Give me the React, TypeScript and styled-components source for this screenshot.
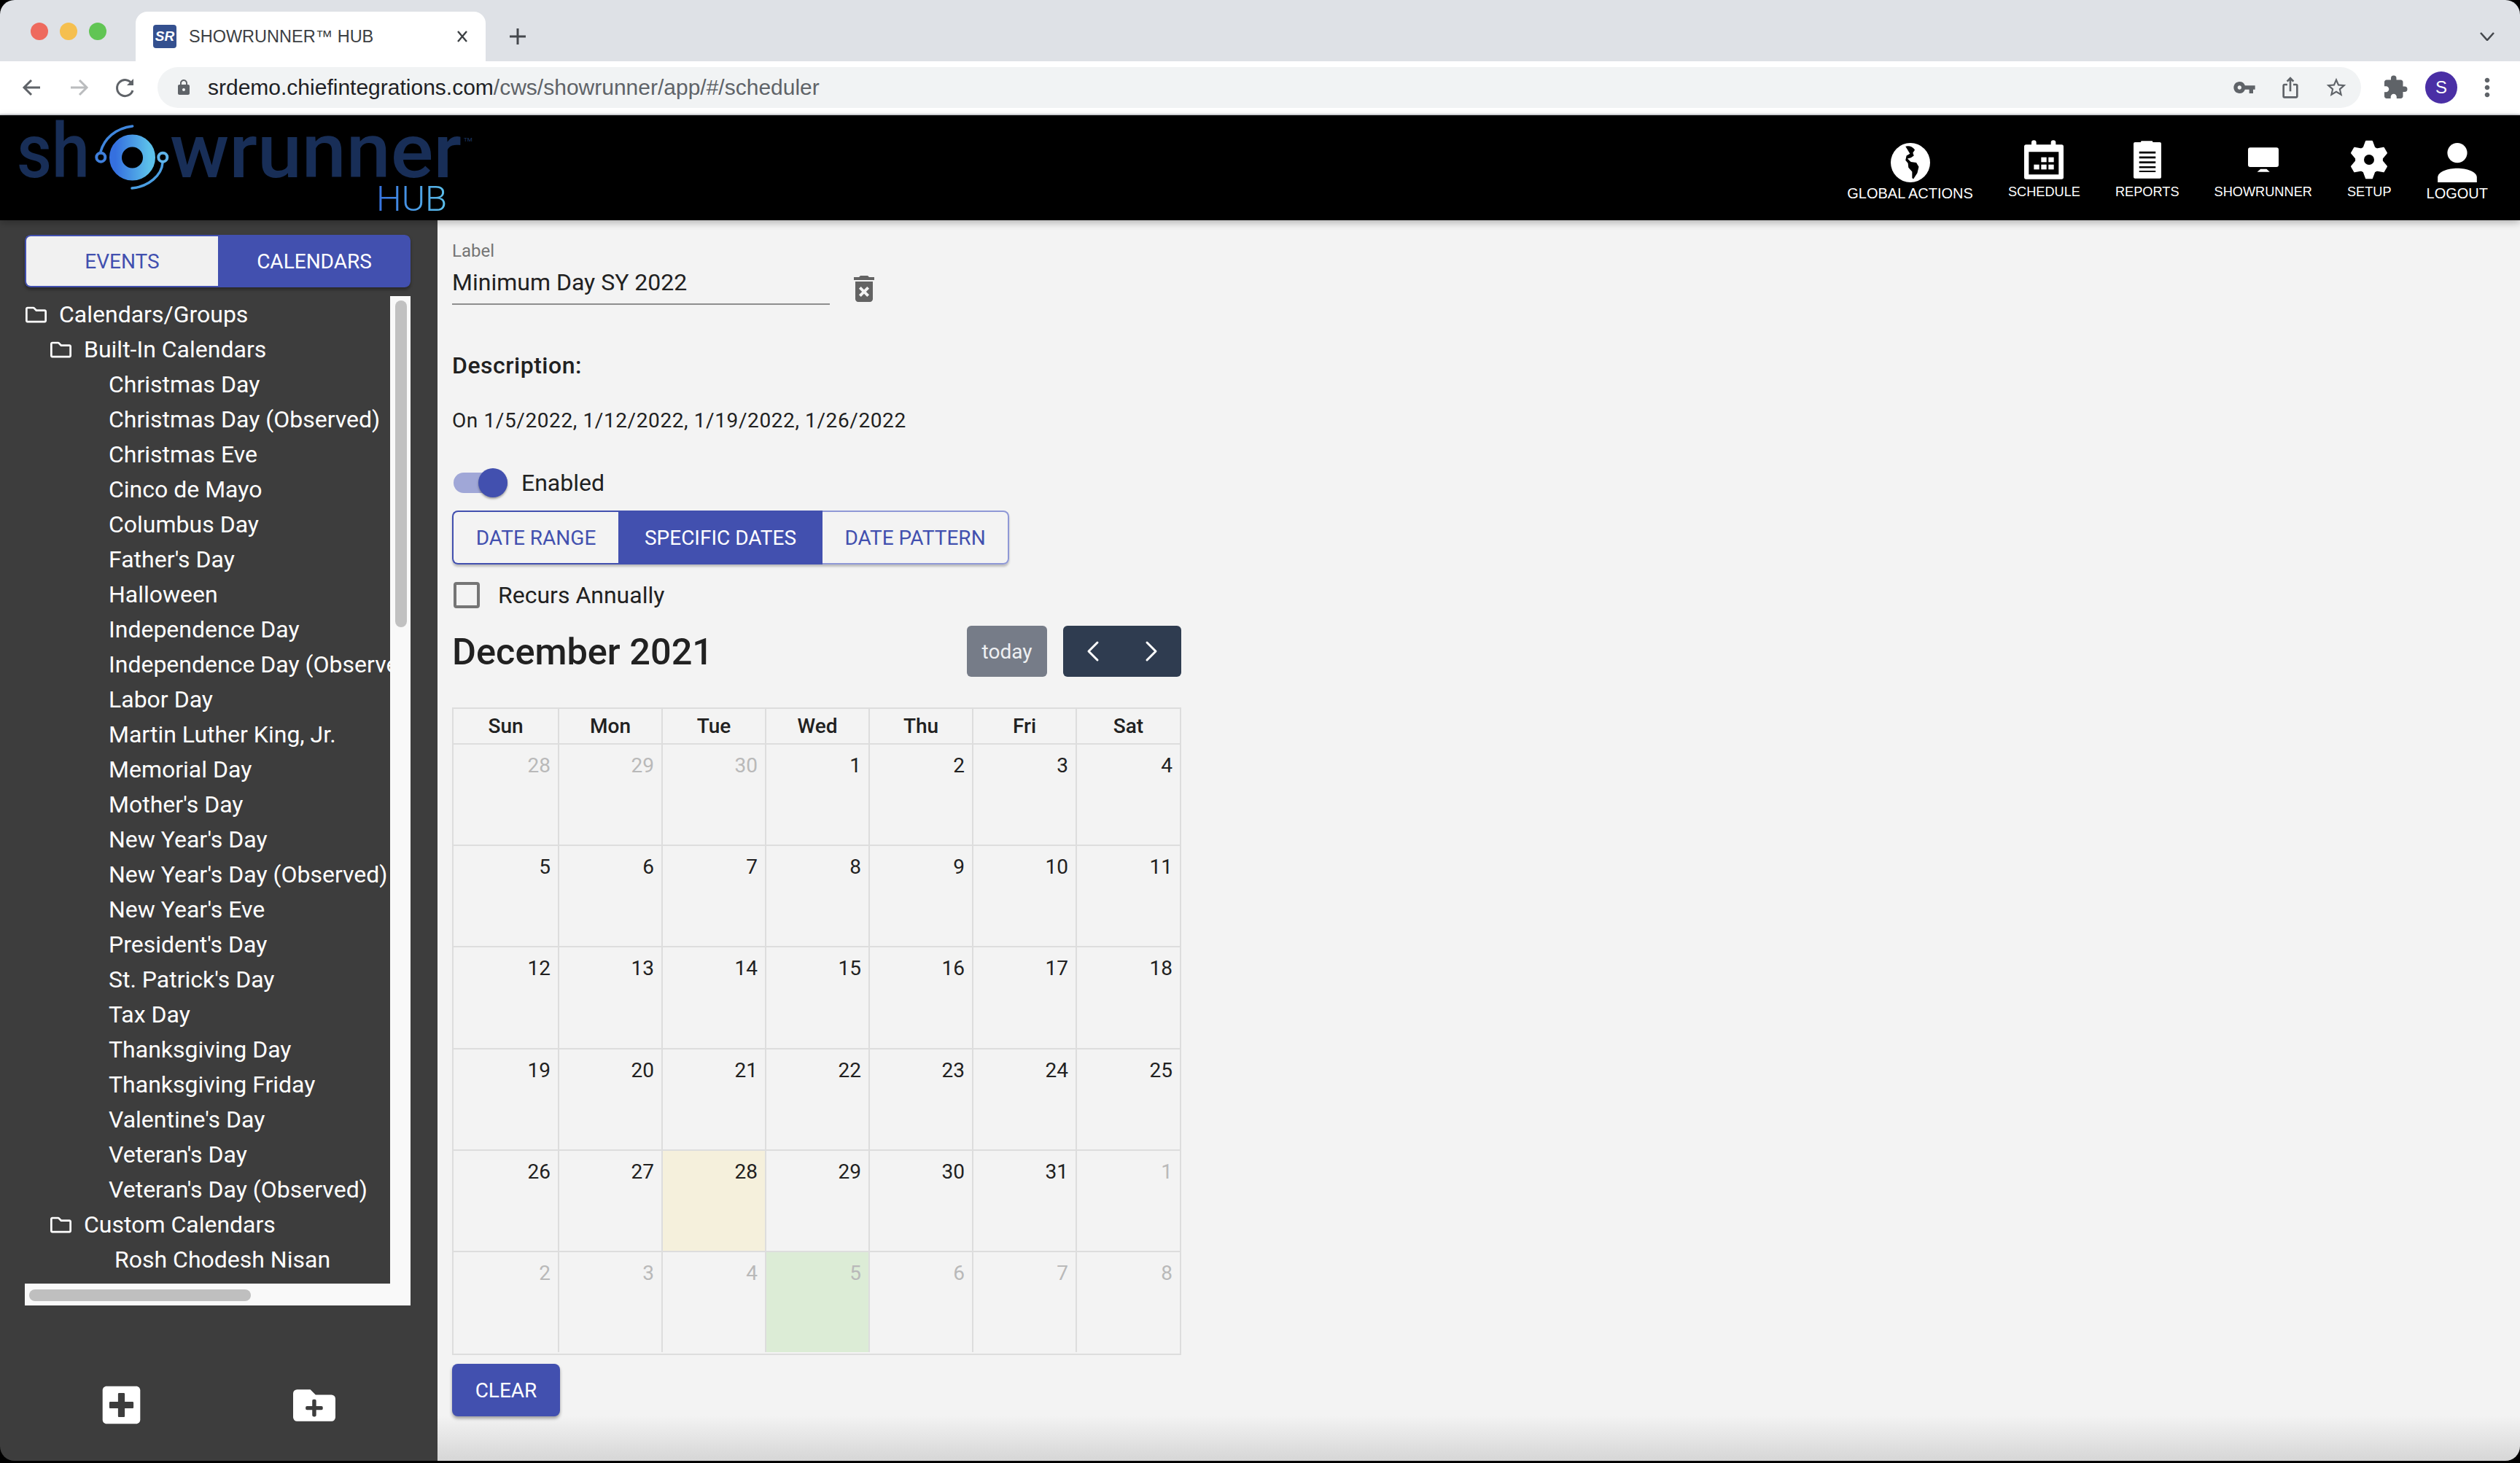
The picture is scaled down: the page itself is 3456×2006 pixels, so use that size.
import React from 'react';
import styled, { createGlobalStyle } from 'styled-components';
import { FaPlusSquare, FaFolderPlus, FaRegFolder } from 'react-icons/fa';
import { MdDeleteForever, MdVpnKey, MdIosShare, MdStarBorder, MdExtension, MdLock, MdMoreVert } from 'react-icons/md';
import { ChevronLeft, ChevronRight } from 'lucide-react';

const APP_FONT = `Roboto, "Noto Sans", sans-serif`;
const UI_FONT = `"Liberation Sans", Arial, sans-serif`;
const PRIMARY = '#4250af';

const Global = createGlobalStyle`
  html, body { margin: 0; padding: 0; background: #000; }
  #root { width: 3456px; height: 2006px; overflow: hidden; }
  * { box-sizing: border-box; }
`;

const Window = styled.div`
  width: 3456px;
  height: 2003px;
  display: flex;
  flex-direction: column;
  overflow: hidden;
  border-radius: 20px;
  font-family: ${APP_FONT};
  color: #212121;
`;

const TabStrip = styled.div`
  height: 84px;
  flex: none;
  background: #dee1e6;
  display: flex;
  padding-top: 16px;
  padding-right: 35px;
  font-family: ${UI_FONT};
`;
const Lights = styled.div`
  display: flex;
  gap: 16px;
  padding: 15px 40px 0 42px;
`;
const Light = styled.span<{ $c: string }>`
  width: 24px;
  height: 24px;
  border-radius: 50%;
  background: ${p => p.$c};
`;
const Tab = styled.div`
  width: 480px;
  background: #fff;
  border-radius: 16px 16px 0 0;
  display: flex;
  align-items: center;
  padding: 0 24px;
  gap: 17px;
`;
const Favicon = styled.span`
  width: 32px;
  height: 32px;
  flex: none;
  border-radius: 4px;
  background: #34508f;
  color: #fff;
  font: italic 700 19px ${UI_FONT};
  display: flex;
  align-items: center;
  justify-content: center;
`;
const TabTitle = styled.span`
  font-size: 23.5px;
  color: #3c4043;
  white-space: nowrap;
  flex: 1;
`;
const StripIcon = styled.span<{ $auto?: boolean }>`
  display: flex;
  align-items: center;
  margin-left: ${p => (p.$auto ? 'auto' : '32px')};
  color: #45484d;
`;

const Toolbar = styled.div`
  height: 74px;
  flex: none;
  background: #fff;
  border-bottom: 2px solid #dadce0;
  display: flex;
  align-items: center;
  padding-left: 28px;
  font-family: ${UI_FONT};
`;
const NavIcons = styled.div`
  display: flex;
  gap: 32px;
  margin-right: 28px;
  color: #5f6368;
`;
const Address = styled.div`
  width: 3022px;
  height: 56px;
  background: #f1f3f4;
  border-radius: 28px;
  display: flex;
  align-items: center;
  padding: 0 18px 0 24px;
  color: #5f6368;
`;
const Url = styled.span`
  font-size: 30px;
  margin-left: 21px;
  color: #5f6368;
  flex: 1;
  white-space: nowrap;
`;
const UrlHost = styled.span`
  color: #202124;
`;
const AddressIcons = styled.div`
  display: flex;
  gap: 31px;
`;
const Avatar = styled.span`
  width: 44px;
  height: 44px;
  border-radius: 50%;
  background: #4a2fa5;
  color: #fff;
  font-size: 24px;
  display: flex;
  align-items: center;
  justify-content: center;
  margin: 0 21px 0 23px;
`;
const ToolbarIcon = styled.span`
  display: flex;
  color: #5f6368;
  margin-left: 29px;
`;
const MoreIcon = styled.span`
  display: flex;
  color: #5f6368;
`;

const Header = styled.header`
  height: 144px;
  flex: none;
  background: #000;
  display: flex;
  justify-content: space-between;
  padding-right: 44px;
  position: relative;
  z-index: 2;
  box-shadow: 0 3px 10px rgba(0, 0, 0, 0.28);
`;
const NavBar = styled.nav`
  display: flex;
  gap: 48px;
`;
const NavItem = styled.div<{ $low?: boolean }>`
  display: flex;
  flex-direction: column;
  align-items: center;
  padding-top: ${p => (p.$low ? '38px' : '34px')};
  gap: ${p => (p.$low ? '3px' : '5px')};
  color: #fff;
`;
const NavGlyph = styled.span`
  height: 54px;
  display: flex;
  align-items: center;
  justify-content: center;
`;
const NavLabel = styled.span<{ $big?: boolean }>`
  font: ${p => (p.$big ? '20px' : '18.2px')}/24px ${UI_FONT};
  color: #fff;
  white-space: nowrap;
`;

const Body = styled.div`
  flex: 1;
  display: flex;
  min-height: 0;
`;
const Sidebar = styled.aside`
  width: 600px;
  flex: none;
  background: #3d3d3d;
  padding: 20px 37px 0 34px;
  display: flex;
  flex-direction: column;
`;
const SideTabs = styled.div`
  height: 72px;
  flex: none;
  display: grid;
  grid-template-columns: 265px 264px;
  border-radius: 8px;
  box-shadow: 0 3px 4px rgba(0, 0, 0, 0.35);
  overflow: hidden;
`;
const SideTab = styled.div<{ $on?: boolean }>`
  display: flex;
  align-items: center;
  justify-content: center;
  font-size: 28px;
  background: ${p => (p.$on ? PRIMARY : '#f1f1f1')};
  color: ${p => (p.$on ? '#fff' : PRIMARY)};
  border: 2px solid ${PRIMARY};
  border-right-width: ${p => (p.$on ? '2px' : '0')};
  border-radius: ${p => (p.$on ? '0 8px 8px 0' : '8px 0 0 8px')};
`;
const Tree = styled.div`
  margin-top: 12px;
  height: 1384px;
  flex: none;
  display: grid;
  grid-template-columns: 501px 28px;
  grid-template-rows: 1354px 30px;
  background: #f9f9f9;
`;
const TreeView = styled.div`
  background: #3d3d3d;
  overflow: hidden;
  padding-top: 1px;
`;
const TreeRow = styled.div<{ $indent: number }>`
  height: 48px;
  display: flex;
  align-items: center;
  gap: 17px;
  padding-left: ${p => p.$indent}px;
  font-size: 32px;
  color: #fff;
  white-space: nowrap;
`;
const VTrack = styled.div`
  padding: 6px 5px 0 7px;
`;
const VThumb = styled.div`
  height: 448px;
  background: #c1c1c1;
  border-radius: 8px;
`;
const HTrack = styled.div`
  grid-column: 1 / span 2;
  padding: 8px 0 0 6px;
`;
const HThumb = styled.div`
  width: 304px;
  height: 16px;
  background: #bfbfbf;
  border-radius: 8px;
`;
const SideFooter = styled.div`
  display: grid;
  grid-template-columns: 265px 264px;
  align-items: center;
  justify-items: center;
  height: 52px;
  margin-top: 107px;
  color: #fff;
`;

const Main = styled.main`
  flex: 1;
  padding: 28px 20px 0;
  background: linear-gradient(to top, #d6d6d6 0, #f3f3f3 62px);
`;
const Form = styled.div`
  width: 1000px;
  display: flex;
  flex-direction: column;
`;
const LabelRow = styled.div`
  display: flex;
  align-items: flex-end;
`;
const Field = styled.div`
  width: 518px;
  border-bottom: 2px solid #8e8e8e;
  padding-bottom: 9px;
`;
const FieldLabel = styled.div`
  font-size: 24px;
  line-height: 28px;
  color: #757575;
`;
const FieldValue = styled.div`
  font-size: 32px;
  line-height: 40px;
  margin-top: 9px;
`;
const TrashIcon = styled.span`
  display: flex;
  color: #636363;
  margin: 0 0 -2px 23px;
`;
const DescTitle = styled.div`
  margin-top: 63px;
  font-size: 32px;
  line-height: 40px;
  font-weight: 500;
  letter-spacing: 0.5px;
`;
const DescText = styled.div`
  margin-top: 38px;
  font-size: 28px;
  line-height: 36px;
  letter-spacing: 0.6px;
`;
const ToggleRow = styled.div`
  margin: 47px 0 0 2px;
  height: 40px;
  display: flex;
  align-items: center;
  gap: 19px;
  font-size: 32px;
`;
const Switch = styled.span`
  position: relative;
  width: 74px;
  height: 28px;
  border-radius: 14px;
  background: #a0a7d7;
`;
const SwitchThumb = styled.span`
  position: absolute;
  top: -6px;
  right: 0;
  width: 40px;
  height: 40px;
  border-radius: 50%;
  background: ${PRIMARY};
  box-shadow: 0 2px 3px rgba(0, 0, 0, 0.35);
`;
const Segments = styled.div`
  margin-top: 18px;
  width: 764px;
  height: 74px;
  display: grid;
  grid-template-columns: 228px 280px 256px;
  border-radius: 8px;
  box-shadow: 0 3px 3px rgba(0, 0, 0, 0.22);
`;
const Segment = styled.div<{ $on?: boolean; $pos: 'l' | 'm' | 'r' }>`
  display: flex;
  align-items: center;
  justify-content: center;
  font-size: 28px;
  background: ${p => (p.$on ? PRIMARY : '#f3f3f3')};
  color: ${p => (p.$on ? '#fff' : PRIMARY)};
  border: 2px solid ${p => (p.$pos === 'r' ? '#8f98d6' : PRIMARY)};
  border-left-width: ${p => (p.$pos === 'r' ? '0' : '2px')};
  border-right-width: ${p => (p.$pos === 'l' ? '0' : '2px')};
  border-radius: ${p => (p.$pos === 'l' ? '8px 0 0 8px' : p.$pos === 'r' ? '0 8px 8px 0' : '0')};
`;
const CheckRow = styled.div`
  margin: 24px 0 0 2px;
  height: 36px;
  display: flex;
  align-items: center;
  gap: 25px;
  font-size: 32px;
`;
const CheckBox = styled.span`
  width: 36px;
  height: 36px;
  border: 4px solid #757575;
  border-radius: 4px;
`;
const CalBar = styled.div`
  margin-top: 24px;
  height: 70px;
  display: flex;
  justify-content: space-between;
  align-items: center;
`;
const CalTitle = styled.h2`
  margin: 0;
  font-size: 50.5px;
  font-weight: 500;
  color: #212121;
`;
const CalButtons = styled.div`
  display: flex;
  gap: 22px;
  height: 70px;
`;
const TodayBtn = styled.div`
  width: 110px;
  border-radius: 6px;
  background: #767c88;
  color: #eef0f2;
  font-size: 28px;
  display: flex;
  align-items: center;
  justify-content: center;
`;
const NavGroup = styled.div`
  width: 162px;
  border-radius: 6px;
  background: #2f3c50;
  color: #fff;
  display: flex;
  align-items: center;
  justify-content: space-between;
  padding: 0 17px;
`;
const Calendar = styled.div`
  margin-top: 42px;
  height: 888px;
  display: grid;
  grid-template-columns: 143px repeat(5, 142px) 143px;
  grid-template-rows: 49px repeat(5, 139.2px) 1fr;
  border: 2px solid #dddddd;
  padding-bottom: 2px;
`;
const HeadCell = styled.div<{ $first: boolean }>`
  display: flex;
  align-items: center;
  justify-content: center;
  font-size: 28px;
  font-weight: 500;
  border-bottom: 2px solid #dddddd;
  border-left: ${p => (p.$first ? 'none' : '2px solid #dddddd')};
`;
const DayCell = styled.div<{ $first: boolean; $last: boolean; $off: boolean; $bg?: string }>`
  text-align: right;
  padding: 11px 10px 0 0;
  font-size: 28px;
  line-height: 36px;
  color: ${p => (p.$off ? '#b9b9b9' : '#212121')};
  background: ${p => p.$bg || 'transparent'};
  border-left: ${p => (p.$first ? 'none' : '2px solid #dddddd')};
  border-bottom: ${p => (p.$last ? 'none' : '2px solid #dddddd')};
`;
const ClearBtn = styled.div`
  margin-top: 12px;
  width: 148px;
  height: 72px;
  border-radius: 8px;
  background: ${PRIMARY};
  color: #fff;
  font-size: 28px;
  display: flex;
  align-items: center;
  justify-content: center;
  box-shadow: 0 3px 4px rgba(0, 0, 0, 0.35);
`;

const LEAVES = [
  'Christmas Day', 'Christmas Day (Observed)', 'Christmas Eve', 'Cinco de Mayo', 'Columbus Day', "Father's Day",
  'Halloween', 'Independence Day', 'Independence Day (Observed)', 'Labor Day', 'Martin Luther King, Jr.',
  'Memorial Day', "Mother's Day", "New Year's Day", "New Year's Day (Observed)", "New Year's Eve", "President's Day",
  "St. Patrick's Day", 'Tax Day', 'Thanksgiving Day', 'Thanksgiving Friday', "Valentine's Day", "Veteran's Day",
  "Veteran's Day (Observed)",
];

const WEEK = ['Sun', 'Mon', 'Tue', 'Wed', 'Thu', 'Fri', 'Sat'];
const DAYS: { n: number; off?: boolean; bg?: string }[] = [
  { n: 28, off: true }, { n: 29, off: true }, { n: 30, off: true },
  ...Array.from({ length: 31 }, (_, i) => ({
    n: i + 1,
    bg: i + 1 === 28 ? '#f5f0dc' : undefined,
  })),
  { n: 1, off: true }, { n: 2, off: true }, { n: 3, off: true }, { n: 4, off: true },
  { n: 5, off: true, bg: '#dcecd6' }, { n: 6, off: true }, { n: 7, off: true }, { n: 8, off: true },
];

const Logo = () => (
  <svg width="660" height="144" viewBox="0 0 660 144">
    <defs>
      <linearGradient id="lg" x1="0" x2="1" y1="0" y2="0">
        <stop offset="0" stopColor="#3570df" />
        <stop offset="1" stopColor="#5cc0ea" />
      </linearGradient>
    </defs>
    <text x="23" y="85" fontFamily="Roboto, sans-serif" fontWeight="500" fontSize="104" fill="#182e57" textLength="100" lengthAdjust="spacingAndGlyphs">sh</text>
    <text x="233" y="85" fontFamily="Roboto, sans-serif" fontWeight="500" fontSize="104" fill="#182e57" textLength="400" lengthAdjust="spacingAndGlyphs">wrunner</text>
    <text x="636" y="36" fontFamily="Roboto, sans-serif" fontSize="8" fill="#1f3a68">TM</text>
    <circle cx="181.5" cy="58" r="23" fill="none" stroke="url(#lg)" strokeWidth="17" />
    <path d="M138 50 C143 32 158 18 181.7 15" fill="none" stroke="#3f86dd" strokeWidth="3.5" strokeLinecap="round" />
    <circle cx="138.3" cy="57.7" r="6" fill="none" stroke="#3f7fdc" strokeWidth="4" />
    <path d="M223 65 C222 82 204 98 181 100" fill="none" stroke="#4a9ee2" strokeWidth="3.5" strokeLinecap="round" />
    <circle cx="223.3" cy="57.7" r="6" fill="none" stroke="#5fb4ea" strokeWidth="4" />
    <text x="516" y="131" fontFamily="Roboto, sans-serif" fontWeight="300" fontSize="48" fill="url(#lg)" textLength="97" lengthAdjust="spacingAndGlyphs">HUB</text>
  </svg>
);

const GlobeIcon = () => (
  <svg width="54" height="54" viewBox="68 48 160 160">
    <circle cx="148" cy="128" r="80" fill="#fff" />
    <path
      fill="#000"
      d="M128 62C140 58 158 62 166 76L158 88L162 100L150 108L136 112L150 125L172 128L182 145L176 170L160 195L155 190L155 165L140 148L138 130L128 118L132 100L146 92L138 78Z"
    />
  </svg>
);
const ScheduleIcon = () => (
  <svg width="54" height="54" viewBox="618 37 162 160" fill="#fff">
    <rect x="648" y="37" width="20" height="30" rx="10" />
    <rect x="728" y="37" width="20" height="30" rx="10" />
    <path
      fillRule="evenodd"
      d="M626 55H772a8 8 0 0 1 8 8V189a8 8 0 0 1-8 8H626a8 8 0 0 1-8-8V63a8 8 0 0 1 8-8ZM637 85V178H760V85Z"
    />
    <rect x="688" y="107" width="22" height="20" />
    <rect x="718" y="107" width="22" height="20" />
    <rect x="658" y="137" width="22" height="20" />
    <rect x="688" y="137" width="22" height="20" />
    <rect x="718" y="137" width="22" height="20" />
  </svg>
);
const ReportsIcon = () => (
  <svg width="38" height="52" viewBox="1062 37 113 153" fill="#fff">
    <rect x="1092" y="37" width="48" height="12" rx="3" />
    <path
      fillRule="evenodd"
      d="M1068 42H1169a6 6 0 0 1 6 6V184a6 6 0 0 1-6 6H1068a6 6 0 0 1-6-6V48a6 6 0 0 1 6-6ZM1085 80V88H1152V80ZM1085 100V108H1152V100ZM1085 120V128H1152V120ZM1085 140V148H1152V140ZM1085 158V164H1152V158Z"
    />
  </svg>
);
const MonitorIcon = () => (
  <svg width="42" height="34" viewBox="95 66 127 101" fill="#fff">
    <rect x="95" y="66" width="127" height="81" rx="9" />
    <path d="M147 155H172L185 167H133Z" />
  </svg>
);

const gearPath = (() => {
  const pt = (deg: number, r: number) => {
    const a = (deg * Math.PI) / 180;
    return `${(596 + r * Math.cos(a)).toFixed(1)} ${(117 + r * Math.sin(a)).toFixed(1)}`;
  };
  const parts: string[] = [];
  for (let i = 0; i < 6; i++) {
    const c = -90 + i * 60;
    parts.push(pt(c - 24, 54), pt(c - 9, 77), pt(c + 9, 77), pt(c + 24, 54));
  }
  return `M${parts.join('L')}Z`;
})();
const GearIcon = () => (
  <svg width="54" height="54" viewBox="515 36 162 162">
    <path d={gearPath} fill="#fff" stroke="#fff" strokeWidth="6" strokeLinejoin="round" />
    <circle cx="596" cy="117" r="21" fill="#000" />
  </svg>
);
const PersonIcon = () => (
  <svg width="54" height="54" viewBox="876 47 162 163" fill="#fff">
    <circle cx="957" cy="88" r="41" />
    <path d="M876 210V190C876 165 920 152 957 152S1038 165 1038 190V210Z" />
  </svg>
);
const BackIcon = () => (
  <svg width="32" height="32" viewBox="0 0 32 32" fill="none" stroke="currentColor" strokeWidth="3">
    <path d="M27 16H6M15 6L5 16l10 10" />
  </svg>
);
const ForwardIcon = () => (
  <svg width="32" height="32" viewBox="0 0 32 32" fill="none" stroke="#babcbe" strokeWidth="3">
    <path d="M5 16h21M17 6l10 10-10 10" />
  </svg>
);
const ReloadIcon = () => (
  <svg width="32" height="32" viewBox="0 0 32 32" fill="none" stroke="currentColor" strokeWidth="3">
    <path d="M26 20a11 11 0 1 1-1-9" />
    <path d="M27 4v9h-9z" fill="currentColor" stroke="none" />
  </svg>
);
const PlusIcon = () => (
  <svg width="24" height="24" viewBox="0 0 24 24" stroke="currentColor" strokeWidth="3">
    <path d="M12 1v22M1 12h22" />
  </svg>
);
const CloseIcon = () => (
  <svg width="16" height="16" viewBox="0 0 16 16" stroke="#3c4043" strokeWidth="2.4">
    <path d="M2 1l12 14M14 1L2 15" />
  </svg>
);
const ChevronIcon = () => (
  <svg width="20" height="12" viewBox="0 0 20 12" fill="none" stroke="#45484d" strokeWidth="2.6">
    <path d="M1 1l9 10 9-10" />
  </svg>
);

export default function App() {
  return (
    <>
      <Global />
      <Window>
        <TabStrip>
          <Lights>
            <Light $c="#ee6a5e" />
            <Light $c="#f5bf4f" />
            <Light $c="#61c554" />
          </Lights>
          <Tab>
            <Favicon>SR</Favicon>
            <TabTitle>SHOWRUNNER™ HUB</TabTitle>
            <CloseIcon />
          </Tab>
          <StripIcon><PlusIcon /></StripIcon>
          <StripIcon $auto><ChevronIcon /></StripIcon>
        </TabStrip>
        <Toolbar>
          <NavIcons>
            <BackIcon />
            <ForwardIcon />
            <ReloadIcon />
          </NavIcons>
          <Address>
            <MdLock size={24} />
            <Url><UrlHost>srdemo.chiefintegrations.com</UrlHost>/cws/showrunner/app/#/scheduler</Url>
            <AddressIcons>
              <MdVpnKey size={32} />
              <MdIosShare size={32} />
              <MdStarBorder size={32} />
            </AddressIcons>
          </Address>
          <ToolbarIcon><MdExtension size={36} /></ToolbarIcon>
          <Avatar>S</Avatar>
          <MoreIcon><MdMoreVert size={40} /></MoreIcon>
        </Toolbar>
        <Header>
          <Logo />
          <NavBar>
            <NavItem $low><NavGlyph><GlobeIcon /></NavGlyph><NavLabel $big>GLOBAL ACTIONS</NavLabel></NavItem>
            <NavItem><NavGlyph><ScheduleIcon /></NavGlyph><NavLabel>SCHEDULE</NavLabel></NavItem>
            <NavItem><NavGlyph><ReportsIcon /></NavGlyph><NavLabel>REPORTS</NavLabel></NavItem>
            <NavItem><NavGlyph><MonitorIcon /></NavGlyph><NavLabel>SHOWRUNNER</NavLabel></NavItem>
            <NavItem><NavGlyph><GearIcon /></NavGlyph><NavLabel>SETUP</NavLabel></NavItem>
            <NavItem $low><NavGlyph><PersonIcon /></NavGlyph><NavLabel $big>LOGOUT</NavLabel></NavItem>
          </NavBar>
        </Header>
        <Body>
          <Sidebar>
            <SideTabs>
              <SideTab>EVENTS</SideTab>
              <SideTab $on>CALENDARS</SideTab>
            </SideTabs>
            <Tree>
              <TreeView>
                <TreeRow $indent={1}><FaRegFolder size={29} />Calendars/Groups</TreeRow>
                <TreeRow $indent={35}><FaRegFolder size={29} />Built-In Calendars</TreeRow>
                {LEAVES.map(name => (
                  <TreeRow key={name} $indent={115}>{name}</TreeRow>
                ))}
                <TreeRow $indent={35}><FaRegFolder size={29} />Custom Calendars</TreeRow>
                <TreeRow $indent={123}>Rosh Chodesh Nisan</TreeRow>
              </TreeView>
              <VTrack><VThumb /></VTrack>
              <HTrack><HThumb /></HTrack>
            </Tree>
            <SideFooter>
              <FaPlusSquare size={59} />
              <FaFolderPlus size={58} />
            </SideFooter>
          </Sidebar>
          <Main>
            <Form>
              <LabelRow>
                <Field>
                  <FieldLabel>Label</FieldLabel>
                  <FieldValue>Minimum Day SY 2022</FieldValue>
                </Field>
                <TrashIcon><MdDeleteForever size={48} /></TrashIcon>
              </LabelRow>
              <DescTitle>Description:</DescTitle>
              <DescText>On 1/5/2022, 1/12/2022, 1/19/2022, 1/26/2022</DescText>
              <ToggleRow>
                <Switch><SwitchThumb /></Switch>
                Enabled
              </ToggleRow>
              <Segments>
                <Segment $pos="l">DATE RANGE</Segment>
                <Segment $pos="m" $on>SPECIFIC DATES</Segment>
                <Segment $pos="r">DATE PATTERN</Segment>
              </Segments>
              <CheckRow>
                <CheckBox />
                Recurs Annually
              </CheckRow>
              <CalBar>
                <CalTitle>December 2021</CalTitle>
                <CalButtons>
                  <TodayBtn>today</TodayBtn>
                  <NavGroup>
                    <ChevronLeft size={48} strokeWidth={1.5} />
                    <ChevronRight size={48} strokeWidth={1.5} />
                  </NavGroup>
                </CalButtons>
              </CalBar>
              <Calendar>
                {WEEK.map((d, i) => (
                  <HeadCell key={d} $first={i === 0}>{d}</HeadCell>
                ))}
                {DAYS.map((d, i) => (
                  <DayCell key={i} $first={i % 7 === 0} $last={i >= 35} $off={!!d.off} $bg={d.bg}>{d.n}</DayCell>
                ))}
              </Calendar>
              <ClearBtn>CLEAR</ClearBtn>
            </Form>
          </Main>
        </Body>
      </Window>
    </>
  );
}
